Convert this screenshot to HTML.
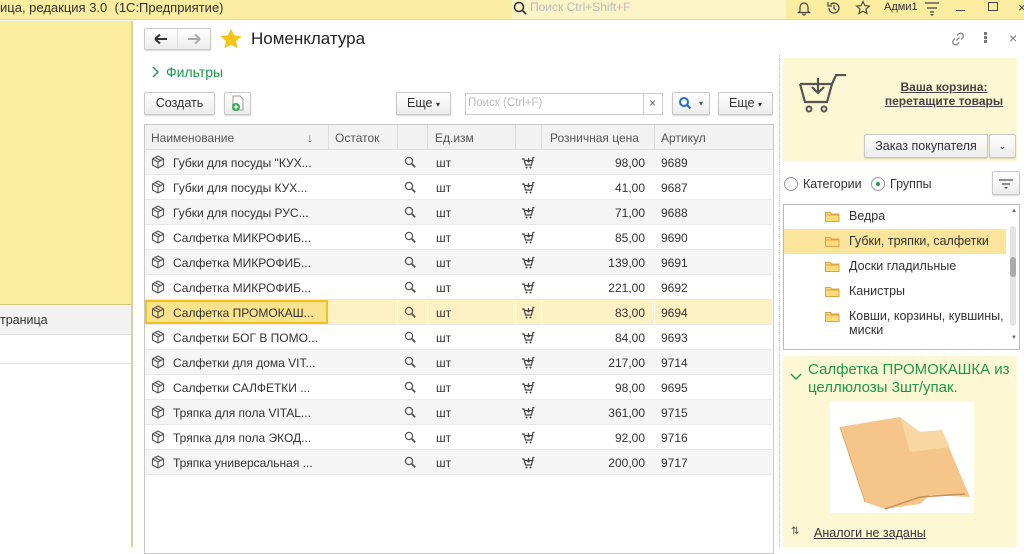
<!DOCTYPE html>
<html><head><meta charset="utf-8"><style>
*{box-sizing:border-box;margin:0;padding:0}
body{width:1024px;height:547px;overflow:hidden;background:#fff;font-family:"Liberation Sans",sans-serif;font-size:12px;color:#333;position:relative}
.a{position:absolute}
.btn{position:absolute;border:1px solid #c8c8c8;border-radius:2px;background:linear-gradient(#fff,#ececec);box-shadow:0 1px 1px rgba(0,0,0,.15);font-size:12px;color:#333;text-align:center}
.row{position:absolute;left:145px;width:627px;height:25px;border-bottom:1px solid #e8e8e8}
.row span{position:absolute;top:6px;white-space:nowrap}
.hd span{position:absolute;top:6px;color:#555}
.vl{position:absolute;top:0;width:1px;height:25px;background:#ddd}
</style></head><body>
<!-- top bar -->
<div class="a" style="left:0;top:0;width:1024px;height:20px;background:#fbed9f;border-bottom:1px solid #e8d98a"></div>
<div class="a" style="left:0;top:0;font-size:13px;color:#333;line-height:15px">ица, редакция 3.0 &nbsp;(1С:Предприятие)</div>
<div class="a" style="left:512px;top:0;width:274px;height:19px;background:#fcf3c6"></div>
<svg class="a" style="left:513px;top:1px" width="14" height="14"><circle cx="6" cy="6" r="4.5" fill="none" stroke="#333" stroke-width="1.5"/><path d="M9 9l4 4" stroke="#333" stroke-width="1.6"/></svg>
<div class="a" style="left:530px;top:0;color:#bbb;font-size:12px;line-height:14px">Поиск Ctrl+Shift+F</div>
<svg class="a" style="left:796px;top:0" width="16" height="16"><path d="M4 11V7a4 4 0 0 1 8 0v4l1.5 1.5h-11z M6.5 13.5a1.5 1.5 0 0 0 3 0" fill="none" stroke="#444" stroke-width="1.2"/></svg>
<svg class="a" style="left:826px;top:0" width="16" height="16"><path d="M3 8a5 5 0 1 0 1.5-3.5" fill="none" stroke="#444" stroke-width="1.3"/><path d="M2 2v4h4" fill="none" stroke="#444" stroke-width="1.2"/><path d="M8 5v3.5l2 1.5" fill="none" stroke="#444" stroke-width="1.2"/></svg>
<svg class="a" style="left:855px;top:0" width="16" height="16"><path d="M8 1.5l1.9 4.2 4.5.4-3.4 3 1 4.4L8 11.2 4 13.5l1-4.4-3.4-3 4.5-.4z" fill="none" stroke="#444" stroke-width="1.1"/></svg>
<div class="a" style="left:884px;top:1px;font-size:11px;color:#333">Адми1</div>
<svg class="a" style="left:924px;top:0" width="16" height="18"><path d="M1 3h14M3 8h10M6 12h4" stroke="#444" stroke-width="1.3"/><path d="M6 14l2 2 2-2z" fill="#444"/></svg>
<div class="a" style="left:956px;top:10px;width:9px;height:1px;background:#444"></div>
<div class="a" style="left:988px;top:2px;width:10px;height:9px;border:1.2px solid #444"></div>
<div class="a" style="left:1018px;top:0;font-size:13px;color:#444">×</div>
<!-- left panel -->
<div class="a" style="left:0;top:21px;width:133px;height:284px;background:#fbec9e;border-bottom:1px solid #d9c878"></div>
<div class="a" style="left:0;top:306px;width:133px;height:29px;background:#f2f2f2;border-bottom:1px solid #e2e2e2"></div>
<div class="a" style="left:0;top:313px;font-size:12.5px;color:#333">траница</div>
<div class="a" style="left:0;top:363px;width:133px;height:1px;background:#e6e6e6"></div>
<div class="a" style="left:131px;top:21px;width:2px;height:526px;background:#d8cf9a"></div>
<!-- header of window -->
<div class="btn" style="left:144px;top:28px;width:67px;height:22px"></div>
<div class="a" style="left:177px;top:30px;width:1px;height:18px;background:#ddd"></div>
<svg class="a" style="left:153px;top:32px" width="16" height="14"><path d="M2 7h12M2 7l5-4.5M2 7l5 4.5" fill="none" stroke="#333" stroke-width="2"/></svg>
<svg class="a" style="left:186px;top:32px" width="16" height="14"><path d="M2 7h12M14 7l-5-4.5M14 7l-5 4.5" fill="none" stroke="#aaa" stroke-width="2"/></svg>
<svg class="a" style="left:219px;top:27px" width="24" height="24"><path d="M12 1.5l3.1 6.8 7.4.8-5.5 5 1.6 7.3L12 17.6l-6.6 3.8 1.6-7.3-5.5-5 7.4-.8z" fill="#f5c518"/></svg>
<div class="a" style="left:251px;top:29px;font-size:17px;color:#222">Номенклатура</div>
<svg class="a" style="left:950px;top:31px" width="16" height="16"><path d="M6.5 9.5l3-3M7 4.5l1.5-1.5a2.8 2.8 0 0 1 4 4L11 8.5M9 11.5L7.5 13a2.8 2.8 0 0 1-4-4L5 7.5" fill="none" stroke="#888" stroke-width="1.3"/></svg>
<div class="a" style="left:984px;top:32px;width:3px;height:3px;background:#777;box-shadow:0 4px 0 #777,0 8px 0 #777"></div>
<div class="a" style="left:1009px;top:30px;font-size:14px;color:#777">×</div>
<svg class="a" style="left:150px;top:65px" width="10" height="14"><path d="M3 2l5 5-5 5" fill="none" stroke="#1a9a4a" stroke-width="1.4"/></svg>
<div class="a" style="left:166px;top:64px;font-size:14px;color:#1a9a4a">Фильтры</div>
<!-- toolbar -->
<div class="btn" style="left:144px;top:92px;width:71px;height:23px;line-height:21px;font-size:12.5px">Создать</div>
<div class="btn" style="left:224px;top:92px;width:27px;height:23px"></div>
<svg class="a" style="left:230px;top:95px" width="16" height="18"><path d="M3 1h7l3 3v11H3z" fill="#fff" stroke="#999"/><circle cx="6" cy="12" r="4" fill="#27a844"/><path d="M6 9.5v5M3.5 12h5" stroke="#fff" stroke-width="1.3"/></svg>
<div class="btn" style="left:396px;top:92px;width:55px;height:23px;line-height:21px;font-size:12.5px">Еще <span style="font-size:8px">▾</span></div>
<div class="a" style="left:465px;top:93px;width:198px;height:22px;border:1px solid #ccc;background:#fff"></div>
<div class="a" style="left:468px;top:97px;color:#bbb;font-size:11.5px">Поиск (Ctrl+F)</div>
<div class="a" style="left:643px;top:93px;width:1px;height:22px;background:#ccc"></div>
<div class="a" style="left:649px;top:96px;color:#666;font-size:12px">×</div>
<div class="btn" style="left:672px;top:92px;width:38px;height:23px"></div>
<svg class="a" style="left:678px;top:96px" width="14" height="14"><circle cx="6" cy="6" r="4" fill="none" stroke="#1f6fc5" stroke-width="2"/><path d="M9 9l3.5 3.5" stroke="#1f6fc5" stroke-width="2.2"/></svg>
<div class="a" style="left:699px;top:99px;font-size:8px;color:#555">▾</div>
<div class="btn" style="left:718px;top:92px;width:55px;height:23px;line-height:21px;font-size:12.5px">Еще <span style="font-size:8px">▾</span></div>
<!-- table -->
<div class="a" style="left:144px;top:124px;width:630px;height:430px;border:1px solid #c8c8c8"></div>
<div class="a hd" style="left:145px;top:125px;width:628px;height:25px;background:#f2f2f2;border-bottom:1px solid #ddd">
<span style="left:6px">Наименование</span><span style="left:162px">↓</span><span style="left:190px">Остаток</span><span style="left:290px">Ед.изм</span><span style="left:405px">Розничная цена</span><span style="left:516px">Артикул</span>
<div class="vl" style="left:183px"></div><div class="vl" style="left:252px"></div><div class="vl" style="left:282px"></div><div class="vl" style="left:370px"></div><div class="vl" style="left:396px"></div><div class="vl" style="left:509px"></div>
</div>
<div id="rows"></div>
<script>
var d=[["Губки для посуды \"КУХ...","98,00","9689"],["Губки для посуды КУХ...","41,00","9687"],["Губки для посуды РУС...","71,00","9688"],["Салфетка МИКРОФИБ...","85,00","9690"],["Салфетка МИКРОФИБ...","139,00","9691"],["Салфетка МИКРОФИБ...","221,00","9692"],["Салфетка ПРОМОКАШ...","83,00","9694"],["Салфетки БОГ В ПОМО...","84,00","9693"],["Салфетки для дома VIT...","217,00","9714"],["Салфетки САЛФЕТКИ ...","98,00","9695"],["Тряпка для пола VITAL...","361,00","9715"],["Тряпка для пола ЭКОД...","92,00","9716"],["Тряпка универсальная ...","200,00","9717"]];
var box='<svg style="position:absolute;left:6px;top:5px" width="14" height="14"><path d="M7 1l5.5 3v6L7 13 1.5 10V4z M1.5 4L7 7l5.5-3 M7 7v6 M4 2.5l5.5 3" fill="none" stroke="#555" stroke-width="1.1"/></svg>';
var mag='<svg style="position:absolute;left:259px;top:6px" width="13" height="13"><circle cx="5" cy="5" r="3.6" fill="none" stroke="#555" stroke-width="1.2"/><path d="M7.7 7.7l3.5 3.5" stroke="#555" stroke-width="1.8"/></svg>';
var cart='<svg style="position:absolute;left:376px;top:5px" width="14" height="15"><path d="M1 4h2l1.5 6h6l1.5-7.5h1.5M3.5 5.5h9" fill="none" stroke="#444" stroke-width="1.2"/><path d="M7.5 3v4M6 5.5l1.5 1.5L9 5.5" fill="none" stroke="#444" stroke-width="1"/><circle cx="5.5" cy="12.5" r="1" fill="#444"/><circle cx="9.5" cy="12.5" r="1" fill="#444"/></svg>';
var h='';
d.forEach(function(r,i){var top=150+i*25;var sel=i==6;var bg=sel?'#fdf0c2':(i%2==0?'#f5f5f5':'#fff');
h+='<div class="row" style="top:'+top+'px;background:'+bg+'">'+(sel?'<div style="position:absolute;left:0;top:0;width:183px;height:24px;background:#fbe38d;border:2px solid #f4c21c"></div><div class="vl" style="left:252px;background:#fff"></div><div class="vl" style="left:282px;background:#fff"></div><div class="vl" style="left:370px;background:#fff"></div><div class="vl" style="left:396px;background:#fff"></div><div class="vl" style="left:509px;background:#fff"></div>':'')+box+'<span style="left:28px">'+r[0]+'</span>'+mag+'<span style="left:291px">шт</span>'+cart+'<span style="right:127px">'+r[1]+'</span><span style="left:516px">'+r[2]+'</span></div>';});
document.getElementById('rows').innerHTML=h;
</script>
<!-- right panel -->
<div class="a" style="left:779px;top:55px;width:0;height:492px;border-left:1px dotted #ccc"></div>
<div class="a" style="left:783px;top:58px;width:234px;height:104px;background:#fdf7d3"></div>
<svg class="a" style="left:798px;top:74px" width="54" height="42"><path d="M2 10h32l4-9h10" fill="none" stroke="#555" stroke-width="2.2"/><path d="M2 10l5 18h22l5-18" fill="none" stroke="#555" stroke-width="2.2"/><path d="M20 4v14M14 13l6 6 6-6" fill="none" stroke="#555" stroke-width="2.2"/><circle cx="11" cy="35" r="2.5" fill="none" stroke="#555" stroke-width="2"/><circle cx="26" cy="35" r="2.5" fill="none" stroke="#555" stroke-width="2"/></svg>
<div class="a" style="left:870px;top:80px;width:148px;text-align:center;font-weight:bold;font-size:12px;color:#444;text-decoration:underline;line-height:14px">Ваша корзина:<br>перетащите товары</div>
<div class="btn" style="left:864px;top:134px;width:124px;height:24px;line-height:22px;font-size:12.5px">Заказ покупателя</div>
<div class="btn" style="left:989px;top:134px;width:27px;height:24px;line-height:22px;font-size:9px">⌄</div>
<div class="a" style="left:784px;top:177px;width:14px;height:14px;border:1px solid #999;border-radius:50%;background:#fff"></div>
<div class="a" style="left:803px;top:177px;font-size:12.5px">Категории</div>
<div class="a" style="left:871px;top:177px;width:14px;height:14px;border:1px solid #999;border-radius:50%;background:#fff"></div>
<div class="a" style="left:876px;top:182px;width:4px;height:4px;border-radius:50%;background:#1a9a4a"></div>
<div class="a" style="left:890px;top:177px;font-size:12.5px">Группы</div>
<div class="btn" style="left:992px;top:171px;width:28px;height:24px"></div>
<svg class="a" style="left:998px;top:176px" width="16" height="14"><path d="M1 4h14M4 8h8" stroke="#555" stroke-width="1.2"/><path d="M6 11l2 2 2-2z" fill="#555"/></svg>
<div class="a" style="left:783px;top:204px;width:237px;height:146px;border:1px solid #bbb;background:#fff"></div>
<div class="a" style="left:784px;top:229px;width:222px;height:25px;background:#fce49a"></div>
<div class="a" style="left:1010px;top:226px;width:6px;height:100px;border-radius:3px;background:#e4e4e4"></div>
<div class="a" style="left:1010px;top:257px;width:6px;height:20px;border-radius:3px;background:#aaa"></div>
<div class="a" style="left:1011px;top:208px;font-size:6px;color:#666">▲</div>
<div class="a" style="left:1011px;top:335px;font-size:6px;color:#666">▼</div>
<div id="tree"></div>
<script>
var t=[["Ведра",217],["Губки, тряпки, салфетки",242],["Доски гладильные",267],["Канистры",292],["Ковши, корзины, кувшины,",317]];var s='';
t.forEach(function(x){s+='<svg class="a" style="left:825px;top:'+(x[1]-6)+'px" width="15" height="11"><path d="M.5 1.5h5l1 1.5h7.5v7.5H.5z" fill="#fcdb7a" stroke="#d9a441"/><path d="M.5 4h14" stroke="#d9a441"/></svg><div class="a" style="left:849px;top:'+(x[1]-8)+'px;font-size:12.5px;white-space:nowrap">'+x[0]+'</div>';});
s+='<div class="a" style="left:849px;top:323px;font-size:12.5px">миски</div>';
document.getElementById('tree').innerHTML=s;
</script>
<div class="a" style="left:783px;top:356px;width:234px;height:191px;background:#fdf7d3"></div>
<svg class="a" style="left:790px;top:372px" width="12" height="10"><path d="M1 2l5 5 5-5" fill="none" stroke="#1a9a4a" stroke-width="1.4"/></svg>
<div class="a" style="left:808px;top:361px;width:205px;font-size:15px;color:#1a9a4a;line-height:18px">Салфетка ПРОМОКАШКА из целлюлозы 3шт/упак.</div>
<div class="a" style="left:830px;top:402px;width:144px;height:111px;background:#fff"></div>
<svg class="a" style="left:830px;top:402px" width="144" height="111"><path d="M10 25 L70 15 L90 30 L112 28 L125 60 L140 95 L100 93 L90 102 L55 107 L35 100 Z" fill="#f5c589"/><path d="M70 15 L90 30 L112 28 L120 45 L80 50 Z" fill="#f8d7a4"/><path d="M55 107 L90 95 L135 92" fill="none" stroke="#c9925a" stroke-width="1.5"/><path d="M10 25 L35 100" fill="none" stroke="#e0a868" stroke-width="1"/></svg>
<div class="a" style="left:791px;top:526px;font-size:10px;color:#555">⇅</div>
<div class="a" style="left:814px;top:526px;font-size:12.5px;color:#333;text-decoration:underline">Аналоги не заданы</div>
</body></html>
